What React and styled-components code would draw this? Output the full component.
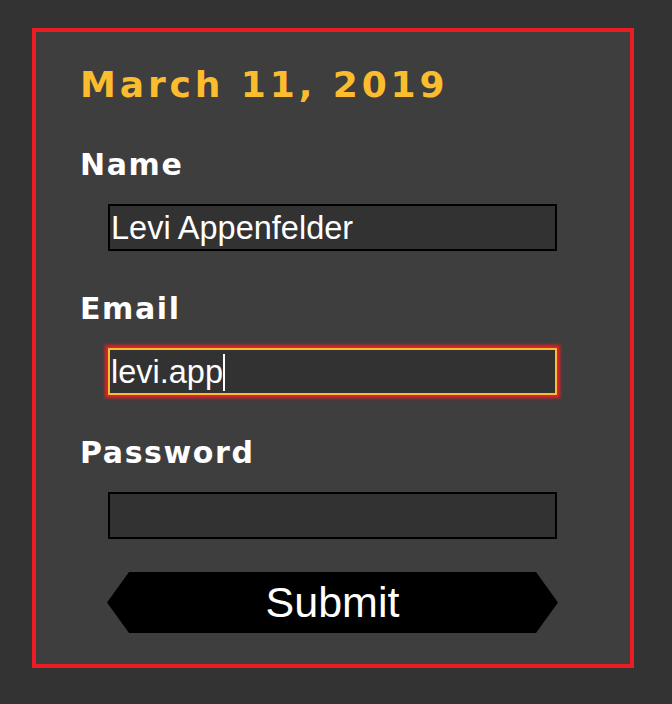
import React, { useState } from 'react';
import styled, { createGlobalStyle } from 'styled-components';

const GlobalStyle = createGlobalStyle`
body {
  margin: 0;
  background: #333333;
  font-family: 'DejaVu Sans', Verdana, sans-serif;
}
`;

const Page = styled.div`
padding: 28px 0 0 32px;
min-height: 704px;
box-sizing: border-box;
`;

const Form = styled.form`
width: 602px;
height: 640px;
box-sizing: border-box;
border: 4px solid #ec1c24;
background: #3e3e3e;
padding: 35px 0 0 44px;
display: flex;
flex-direction: column;
`;

const Title = styled.h1`
margin: 0;
font-family: 'DejaVu Sans', Verdana, sans-serif;
font-size: 36px;
line-height: 36px;
font-weight: bold;
letter-spacing: 3.9px;
color: #fbbd2d;
`;

const Field = styled.div`
display: flex;
flex-direction: column;
margin-top: ${(prop) => (prop.first ? '47px' : '43px')};
`;

const Label = styled.label`
font-family: 'DejaVu Sans', Verdana, sans-serif;
font-size: 30px;
line-height: 30px;
font-weight: bold;
letter-spacing: 1.6px;
color: #ffffff;
`;

const InputWrap = styled.div`
position: relative;
margin: 24px 0 0 28px;
width: 449px;
height: 47px;
`;

const Input = styled.input`
display: block;
width: 100%;
height: 100%;
box-sizing: border-box;
padding: 2px 1px 0;
background: #323232;
color: #ffffff;
caret-color: transparent;
font-family: 'Liberation Sans', Arial, sans-serif;
font-size: 32.5px;
border: 2px solid ${(prop) => (prop.active ? '#fbbd2d' : '#000000')};
box-shadow: ${(prop) => (prop.active ? '0 0 3px 3px #e8202a' : 'none')};
outline: none;
`;

/* draws the text cursor after the typed value */
const CaretLayer = styled.div`
position: absolute;
inset: 0;
padding: 2px 3px 0;
display: flex;
align-items: center;
pointer-events: none;
font-family: 'Liberation Sans', Arial, sans-serif;
font-size: 32.5px;
white-space: pre;
`;

const Mirror = styled.span`
color: transparent;
`;

const Caret = styled.span`
width: 1.5px;
height: 37px;
background: #ffffff;
`;

const SubmitButton = styled.button`
margin: 33px 0 0 27px;
width: 451px;
height: 61px;
border: none;
background: #000000;
color: #ffffff;
font-family: 'Liberation Sans', Arial, sans-serif;
font-size: 43px;
padding: 0;
clip-path: polygon(22px 0, calc(100% - 22px) 0, 100% 50%, calc(100% - 22px) 100%, 22px 100%, 0 50%);
cursor: pointer;
`;

function TextField({
  id, label, value, onChange, type, active,
}) {
  return (
    <Field first={id === 'name'}>
      <Label htmlFor={id}>{label}</Label>
      <InputWrap>
        <Input id={id} type={type} active={active} value={value} onChange={onChange} />
        {active && (
          <CaretLayer>
            <Mirror>{value}</Mirror>
            <Caret />
          </CaretLayer>
        )}
      </InputWrap>
    </Field>
  );
}

function App() {
  const [name, setName] = useState('Levi Appenfelder');
  const [email, setEmail] = useState('levi.app');
  const [password, setPassword] = useState('');

  return (
    <Page>
      <GlobalStyle />
      <Form onSubmit={(e) => e.preventDefault()}>
        <Title>March 11, 2019</Title>
        <TextField id="name" label="Name" value={name} onChange={(e) => setName(e.target.value)} />
        <TextField
          id="email"
          label="Email"
          active
          value={email}
          onChange={(e) => setEmail(e.target.value)}
        />
        <TextField
          id="password"
          label="Password"
          type="password"
          value={password}
          onChange={(e) => setPassword(e.target.value)}
        />
        <SubmitButton type="submit">Submit</SubmitButton>
      </Form>
    </Page>
  );
}

export default App;
